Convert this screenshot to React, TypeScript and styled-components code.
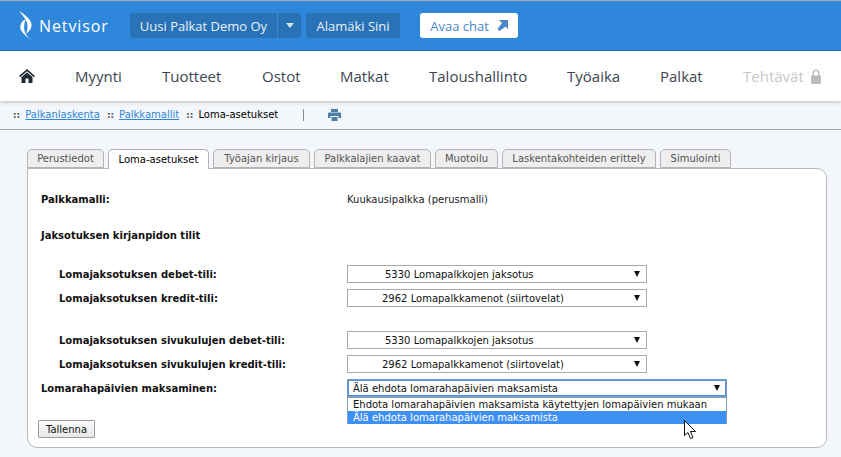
import React from "react";
import styled, { createGlobalStyle } from "styled-components";

const Global = createGlobalStyle`
  html, body { margin: 0; padding: 0; background: #f3f6fa; }
  body { width: 841px; height: 457px; overflow: hidden; font-family: "DejaVu Sans", Verdana, sans-serif; }
  * { box-sizing: border-box; }
`;

const Header = styled.header`
  height: 51px;
  background: #2f87db;
  border-top: 1px solid #a9a9a9;
  border-bottom: 1px solid #2473bd;
  display: flex;
  align-items: center;
  padding: 0 0 0 18px;
  font-family: "Open Sans", sans-serif;
`;
const Logo = styled.div`
  width: 112px;
  display: flex;
  align-items: center;
  gap: 3px;
  color: #fff;
  font-size: 16px;
  letter-spacing: 0.9px;
  margin-top: 1px;
`;
const HeaderBtn = styled.div<{ $w: number }>`
  width: ${(p) => p.$w}px;
  height: 25px;
  background: #2a72b6;
  color: #e8f1fa;
  font-size: 13px;
  display: flex;
  align-items: center;
  justify-content: center;
  border-radius: 3px;
`;
const Company = styled(HeaderBtn)`
  border-radius: 3px 0 0 3px;
`;
const Caret = styled(HeaderBtn)`
  border-radius: 0 3px 3px 0;
  border-left: 1px solid #3d8ad4;
  margin-right: 5px;
`;
const ChatBtn = styled.div`
  margin-left: 20px;
  width: 98px;
  height: 25px;
  background: #fff;
  border-radius: 3px;
  color: #4a87c8;
  font-size: 13px;
  display: flex;
  align-items: center;
  justify-content: center;
  gap: 8px;
`;

const Nav = styled.nav`
  height: 50px;
  background: #fff;
  box-shadow: 0 1px 4px rgba(0, 0, 0, 0.25);
  display: flex;
  align-items: center;
  padding-left: 19px;
  font-family: "Open Sans", sans-serif;
  font-size: 15px;
  color: #3b4650;
  position: relative;
`;
const NavItem = styled.span<{ $w: number; $off?: boolean }>`
  width: ${(p) => p.$w}px;
  flex: none;
  color: ${(p) => (p.$off ? "#c8c8c8" : "#3b4650")};
  display: flex;
  align-items: center;
  gap: 7px;
`;

const Crumbs = styled.div`
  height: 29px;
  border-bottom: 1px solid #a8a8a8;
  display: flex;
  align-items: center;
  padding: 0 0 1px 13px;
  font-size: 10px;
  color: #000;
`;
const Dots = styled.span`
  color: #555;
  font-weight: bold;
  margin-right: 5px;
  font-size: 9px;
`;
const Crumb = styled.a`
  color: #2f87db;
  text-decoration: underline;
  margin-right: 7px;
`;
const Divider = styled.span`
  width: 1px;
  height: 12px;
  background: #888;
  margin: 0 24px 0 25px;
`;

const Main = styled.main`
  padding: 19px 14px 0 27px;
`;
const Tabs = styled.div`
  display: flex;
  gap: 4px;
  height: 19px;
  position: relative;
  z-index: 1;
`;
const Tab = styled.div<{ $w: number; $active?: boolean }>`
  width: ${(p) => p.$w}px;
  height: ${(p) => (p.$active ? 20 : 19)}px;
  background: ${(p) => (p.$active ? "#fff" : "#eeeeee")};
  color: ${(p) => (p.$active ? "#000" : "#555")};
  border: 1px solid #b4b4b4;
  border-bottom: ${(p) => (p.$active ? "none" : "1px solid #b4b4b4")};
  border-radius: 5px 5px 0 0;
  font-size: 10px;
  display: flex;
  align-items: center;
  justify-content: center;
`;
const Panel = styled.section`
  width: 800px;
  height: 280px;
  background: #fff;
  border: 1px solid #b9b9b9;
  border-radius: 0 10px 10px 10px;
  padding: 23px 0 0 10px;
  font-size: 10px;
  color: #000;
  position: relative;
`;
const Row = styled.div<{ $h?: number; $mb?: number }>`
  display: grid;
  grid-template-columns: 309px 1fr;
  align-items: center;
  height: ${(p) => p.$h ?? 18}px;
  margin-bottom: ${(p) => p.$mb ?? 0}px;
  position: relative;
`;
const Label = styled.div<{ $indent?: boolean }>`
  font-weight: bold;
  color: #111;
  padding-left: ${(p) => (p.$indent ? 21 : 3)}px;
`;
const Value = styled.div`
  color: #222;
`;
const Select = styled.div<{ $w?: number; $indent?: number; $focus?: boolean }>`
  width: ${(p) => p.$w ?? 300}px;
  height: 18px;
  border: 1px solid ${(p) => (p.$focus ? "#7f9db9" : "#a9a9a9")};
  box-shadow: ${(p) => (p.$focus ? "0 0 0 1px #4d90e8 inset" : "none")};
  background: #fff;
  padding-left: ${(p) => p.$indent ?? 5}px;
  display: flex;
  align-items: center;
  justify-content: space-between;
  padding-right: 6px;
  color: #111;
`;
const Arrow = styled.span`
  width: 0;
  height: 0;
  border-left: 3px solid transparent;
  border-right: 3px solid transparent;
  border-top: 6px solid #111;
`;
const Dropdown = styled.div`
  position: absolute;
  left: 309px;
  top: 18px;
  width: 380px;
  height: 27px;
  border: 1px solid #7f9db9;
  background: #fff;
  z-index: 2;
  color: #111;
`;
const Option = styled.div<{ $selected?: boolean }>`
  height: 13px;
  line-height: 13px;
  padding-left: 5px;
  background: ${(p) => (p.$selected ? "#3f90f5" : "#fff")};
  color: ${(p) => (p.$selected ? "#fff" : "#111")};
`;
const SaveBtn = styled.button`
  display: block;
  width: 57px;
  height: 18px;
  margin: 23px 0 0 0;
  padding: 0;
  font: inherit;
  color: #111;
  background: linear-gradient(#fbfbfb, #e8e8e8);
  border: 1px solid #9a9a9a;
  border-radius: 1px;
`;
const Cursor = styled.svg`
  position: absolute;
  left: 684px;
  top: 420px;
  z-index: 5;
`;

const LogoMark = () => (
  <svg width="18" height="32" viewBox="0 0 18 32" fill="none">
    <path d="M1 1 C6 4 10 7 12.5 11 C15 16 13 20 8 24 C9.5 20 10 16 9 13 C7.5 8 4 5 1 1Z" fill="#fff" />
    <path d="M7.5 9 C2.5 12 1 17 3.5 21 C6 25 10 28 15 30.5 C11 28 8.5 26 7 22.5 C5.5 18.5 6 14 7.5 9Z" fill="#fff" />
  </svg>
);

const HomeIcon = () => (
  <svg width="16" height="14" viewBox="0 0 16 14">
    <path d="M8 0 L16 7 L15 8.2 L8 2.2 L1 8.2 L0 7Z" fill="#1f2a33" />
    <path d="M8 3.4 L13.5 8 V14 H9.5 V9.5 H6.5 V14 H2.5 V8Z" fill="#1f2a33" />
  </svg>
);

const LockIcon = () => (
  <svg width="10" height="15" viewBox="0 0 10 15">
    <path d="M1.5 7 V4 a3.5 3.5 0 0 1 7 0 V7 H7 V4 a2 2 0 0 0 -4 0 V7Z" fill="#bdbdbd" />
    <rect x="0" y="6.5" width="10" height="8.5" rx="1" fill="#bdbdbd" />
  </svg>
);

const PrintIcon = () => (
  <svg width="13" height="12" viewBox="0 0 13 12">
    <path d="M3 0 H10 V3 H3Z" fill="#4d7ea8" />
    <path d="M1 3.5 H12 a1 1 0 0 1 1 1 V9 H10.5 V7 H2.5 V9 H0 V4.5 a1 1 0 0 1 1 -1Z" fill="#4d7ea8" />
    <path d="M3.5 8 H9.5 V12 H3.5Z" fill="#4d7ea8" />
  </svg>
);

const tabs: [string, number][] = [
  ["Perustiedot", 77],
  ["Loma-asetukset", 101],
  ["Työajan kirjaus", 97],
  ["Palkkalajien kaavat", 117],
  ["Muotoilu", 63],
  ["Laskentakohteiden erittely", 154],
  ["Simulointi", 71],
];

const DEBET = "5330 Lomapalkkojen jaksotus";
const KREDIT = "2962 Lomapalkkamenot (siirtovelat)";
const NOPE = "Älä ehdota lomarahapäivien maksamista";

export default function App() {
  return (
    <>
      <Global />
      <Header>
        <Logo>
          <LogoMark />
          <span>Netvisor</span>
        </Logo>
        <Company $w={147}>Uusi Palkat Demo Oy</Company>
        <Caret $w={24}>
          <svg width="8" height="5" viewBox="0 0 8 5"><path d="M0 0H8L4 5Z" fill="#d5e4f3" /></svg>
        </Caret>
        <HeaderBtn $w={94}>Alamäki Sini</HeaderBtn>
        <ChatBtn>
          Avaa chat
          <svg width="11" height="11" viewBox="0 0 11 11"><path d="M2 0H11V9L8.5 6.5 2.5 11 0.5 9 5 3 2 0Z" fill="#4a87c8" /></svg>
        </ChatBtn>
      </Header>
      <Nav>
        <NavItem $w={56}><HomeIcon /></NavItem>
        <NavItem $w={87}>Myynti</NavItem>
        <NavItem $w={100}>Tuotteet</NavItem>
        <NavItem $w={78}>Ostot</NavItem>
        <NavItem $w={89}>Matkat</NavItem>
        <NavItem $w={138}>Taloushallinto</NavItem>
        <NavItem $w={93}>Työaika</NavItem>
        <NavItem $w={83}>Palkat</NavItem>
        <NavItem $w={80} $off>Tehtävät<LockIcon /></NavItem>
      </Nav>
      <Crumbs>
        <Dots>::</Dots><Crumb>Palkanlaskenta</Crumb>
        <Dots>::</Dots><Crumb>Palkkamallit</Crumb>
        <Dots>::</Dots><span>Loma-asetukset</span>
        <Divider />
        <PrintIcon />
      </Crumbs>
      <Main>
        <Tabs>
          {tabs.map(([t, w], i) => (
            <Tab key={t} $w={w} $active={i === 1}>{t}</Tab>
          ))}
        </Tabs>
        <Panel>
          <Row $h={14} $mb={22}><Label>Palkkamalli:</Label><Value>Kuukausipalkka (perusmalli)</Value></Row>
          <Row $h={14} $mb={23}><Label>Jaksotuksen kirjanpidon tilit</Label></Row>
          <Row $mb={6}><Label $indent>Lomajaksotuksen debet-tili:</Label><Select $indent={37}>{DEBET}<Arrow /></Select></Row>
          <Row $mb={24}><Label $indent>Lomajaksotuksen kredit-tili:</Label><Select $indent={34}>{KREDIT}<Arrow /></Select></Row>
          <Row $mb={6}><Label $indent>Lomajaksotuksen sivukulujen debet-tili:</Label><Select $indent={37}>{DEBET}<Arrow /></Select></Row>
          <Row $mb={6}><Label $indent>Lomajaksotuksen sivukulujen kredit-tili:</Label><Select $indent={34}>{KREDIT}<Arrow /></Select></Row>
          <Row>
            <Label>Lomarahapäivien maksaminen:</Label>
            <Select $w={380} $focus>{NOPE}<Arrow /></Select>
            <Dropdown>
              <Option>Ehdota lomarahapäivien maksamista käytettyjen lomapäivien mukaan</Option>
              <Option $selected>{NOPE}</Option>
            </Dropdown>
          </Row>
          <SaveBtn>Tallenna</SaveBtn>
        </Panel>
      </Main>
      <Cursor width="13" height="20" viewBox="0 0 13 20">
        <path d="M0.5 0.5 V15.5 L4 12.5 L6.5 18.5 L9 17.5 L6.5 11.5 H11.5Z" fill="#fff" stroke="#111" strokeWidth="1" />
      </Cursor>
    </>
  );
}
